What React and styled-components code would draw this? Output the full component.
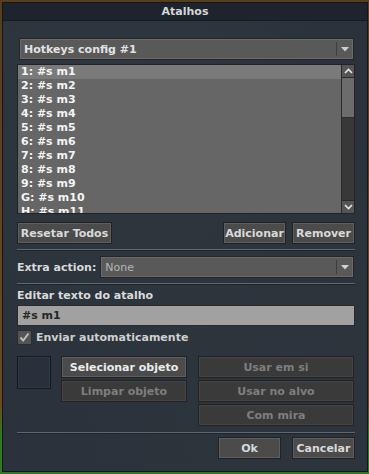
import styled, { createGlobalStyle } from 'styled-components';

const GlobalStyle = createGlobalStyle`
    html, body {
        margin: 0;
        padding: 0;
    }
    body {
        background: linear-gradient(to bottom, #5a3d1c 0%, #6b4a22 85%, #2f7a1e 92%, #2f7a1e 100%);
        font-family: "DejaVu Sans", "Liberation Sans", sans-serif;
        font-size: 11px;
        font-weight: bold;
        width: 369px;
        height: 474px;
        overflow: hidden;
    }
`

const Window = styled.div`
    margin: 2px 0 0 2px;
    width: 366px;
    height: 470px;
    box-sizing: border-box;
    border: 1px solid #12171d;
    background:
        radial-gradient(ellipse at 30% 20%, rgba(60, 80, 80, 0.18), transparent 60%),
        radial-gradient(ellipse at 80% 80%, rgba(50, 70, 70, 0.15), transparent 60%),
        #2b323b;
    display: flex;
    flex-direction: column;
`

const TitleBar = styled.div`
    height: 17px;
    line-height: 18px;
    background: #1d242d;
    color: #d6d6d6;
    text-align: center;
    border-bottom: 1px solid #161b22;
`

const Body = styled.div`
    display: flex;
    flex-direction: column;
    padding: 17px 12px 0 14px;
`

const Combo = styled.div`
    position: relative;
    height: 22px;
    box-sizing: border-box;
    margin: ${p => p.$inset ? '0 1px 0 2px' : '0'};
    flex: ${p => p.$grow ? 1 : 'none'};
    border: 1px solid #262626;
    box-shadow: inset 0 0 0 1px #6a6a6a;
    background: #595959;
    color: ${p => p.$dim ? '#b4b4b4' : '#e2e2e2'};
    display: flex;
    align-items: center;
    padding-left: 4px;
    font-weight: ${p => p.$dim ? 'normal' : 'bold'};
`

const ComboArrow = styled.div`
    position: absolute;
    right: 0;
    top: 3px;
    bottom: 3px;
    width: 16px;
    border-left: 1px solid #3e3e3e;
    display: flex;
    align-items: center;
    justify-content: center;
`

const List = styled.div`
    margin-top: 4px;
    height: 150px;
    box-sizing: border-box;
    border: 1px solid #232323;
    background: #666666;
    display: flex;
`

const Rows = styled.div`
    flex: 1;
    overflow: hidden;
`

const Row = styled.div`
    height: 14px;
    line-height: 14px;
    padding-left: 3px;
    color: #f4f4f4;
    background: ${p => p.$selected ? '#7a7a7a' : 'transparent'};
    white-space: nowrap;
`

const ScrollBar = styled.div`
    width: 12px;
    border-left: 1px solid #2a2a2a;
    display: flex;
    flex-direction: column;
    background: #383838;
`

const ScrollButton = styled.div`
    height: 12px;
    background: #555555;
    display: flex;
    align-items: center;
    justify-content: center;
    border-bottom: ${p => p.$top ? '1px solid #2a2a2a' : 'none'};
    border-top: ${p => p.$top ? 'none' : '1px solid #2a2a2a'};
`

const Thumb = styled.div`
    height: 39px;
    background: #6c6c6c;
    border-bottom: 1px solid #2e2e2e;
`

const Track = styled.div`
    flex: 1;
`

const ButtonRow = styled.div`
    display: flex;
    gap: ${p => p.$gap || 6}px;
    margin-top: ${p => p.$top || 0}px;
    justify-content: ${p => p.$end ? 'flex-end' : 'flex-start'};
    align-items: center;
`

const Spacer = styled.div`
    flex: 1;
`

const Button = styled.div`
    width: ${p => p.$w ? p.$w + 'px' : 'auto'};
    height: 22px;
    box-sizing: border-box;
    padding: 0 ${p => p.$w ? 0 : 4}px;
    border: 1px solid #222222;
    box-shadow: inset 0 0 0 1px ${p => p.$disabled ? '#444444' : '#5e5e5e'};
    background: ${p => p.$disabled ? '#3a3a3a' : '#4b4b4b'};
    color: ${p => p.$disabled ? '#7e7e7e' : (p.$bright ? '#ececec' : '#d9d9d9')};
    display: flex;
    align-items: center;
    justify-content: center;
    white-space: nowrap;
`

const Separator = styled.div`
    height: 1px;
    margin-top: ${p => p.$top}px;
    background: #62676d;
    box-shadow: 0 1px 0 #1e242b;
`

const FieldRow = styled.div`
    display: flex;
    align-items: center;
    margin-top: 6px;
    gap: 4px;
    color: #d8d8d8;
`

const Label = styled.div`
    margin-top: 5px;
    line-height: 14px;
    color: #dadada;
`

const TextInput = styled.div`
    margin-top: 2px;
    height: 21px;
    box-sizing: border-box;
    border: 1px solid #2a2a2a;
    background: #a1a1a1;
    color: #262626;
    display: flex;
    align-items: center;
    padding-left: 4px;
`

const CheckRow = styled.div`
    margin-top: 4px;
    display: flex;
    align-items: center;
    gap: 4px;
    color: #cfcfcf;
`

const CheckBox = styled.div`
    width: 15px;
    height: 15px;
    box-sizing: border-box;
    border: 1px solid #2c2c2c;
    background: #545454;
    display: flex;
    align-items: center;
    justify-content: center;
`

const ActionArea = styled.div`
    margin-top: 11px;
    display: flex;
    align-items: flex-start;
`

const ItemSlot = styled.div`
    width: 34px;
    height: 33px;
    box-sizing: border-box;
    border: 1px solid #151a20;
    background: #27303b;
    box-shadow: inset 0 0 0 1px #2f3843;
`

const ButtonColumn = styled.div`
    display: flex;
    flex-direction: column;
    gap: 2px;
    width: ${p => p.$w}px;
    margin-left: ${p => p.$left}px;
`

const DownArrow = () => (
    <svg width="8" height="5" viewBox="0 0 8 5">
        <path d="M0 0 H8 L4 4.5 Z" fill="#cfcfcf" />
    </svg>
)

const Chevron = ({ up }) => (
    <svg width="9" height="6" viewBox="0 0 9 6">
        <path d={up ? 'M1 5 L4.5 1.5 L8 5' : 'M1 1 L4.5 4.5 L8 1'} stroke="#e6e6e6" strokeWidth="1.6" fill="none" />
    </svg>
)

const rows = ['1', '2', '3', '4', '5', '6', '7', '8', '9', 'G', 'H'].map((k, i) => `${k}: #s m${i + 1}`)

const App = () => {
    return (
        <>
            <GlobalStyle />
            <Window>
                <TitleBar>Atalhos</TitleBar>
                <Body>
                    <Combo $inset>
                        Hotkeys config #1
                        <ComboArrow><DownArrow /></ComboArrow>
                    </Combo>
                    <List>
                        <Rows>
                            {rows.map((r, i) => (
                                <Row key={r} $selected={i === 0}>{r}</Row>
                            ))}
                        </Rows>
                        <ScrollBar>
                            <ScrollButton $top><Chevron up /></ScrollButton>
                            <Thumb />
                            <Track />
                            <ScrollButton><Chevron /></ScrollButton>
                        </ScrollBar>
                    </List>
                    <ButtonRow $top={8}>
                        <Button $w={95}>Resetar Todos</Button>
                        <Spacer />
                        <Button $w={63}>Adicionar</Button>
                        <Button $w={63}>Remover</Button>
                    </ButtonRow>
                    <Separator $top={5} />
                    <FieldRow>
                        Extra action:
                        <Combo $grow $dim style={{ marginRight: 1 }}>
                            None
                            <ComboArrow><DownArrow /></ComboArrow>
                        </Combo>
                    </FieldRow>
                    <Separator $top={5} />
                    <Label>Editar texto do atalho</Label>
                    <TextInput>#s m1</TextInput>
                    <CheckRow>
                        <CheckBox>
                            <svg width="11" height="11" viewBox="0 0 11 11">
                                <path d="M1.5 5.5 L4.2 8.5 L9.5 1.5" stroke="#bdbdbd" strokeWidth="2" fill="none" />
                            </svg>
                        </CheckBox>
                        Enviar automaticamente
                    </CheckRow>
                    <ActionArea>
                        <ItemSlot />
                        <ButtonColumn $w={126} $left={10}>
                            <Button $bright>Selecionar objeto</Button>
                            <Button $disabled>Limpar objeto</Button>
                        </ButtonColumn>
                        <ButtonColumn $w={156} $left={11}>
                            <Button $disabled>Usar em si</Button>
                            <Button $disabled>Usar no alvo</Button>
                            <Button $disabled>Com mira</Button>
                        </ButtonColumn>
                    </ActionArea>
                    <Separator $top={6} />
                    <ButtonRow $top={4} $end $gap={11}>
                        <Button $w={63}>Ok</Button>
                        <Button $w={63}>Cancelar</Button>
                    </ButtonRow>
                </Body>
            </Window>
        </>
    )
}

export default App;
